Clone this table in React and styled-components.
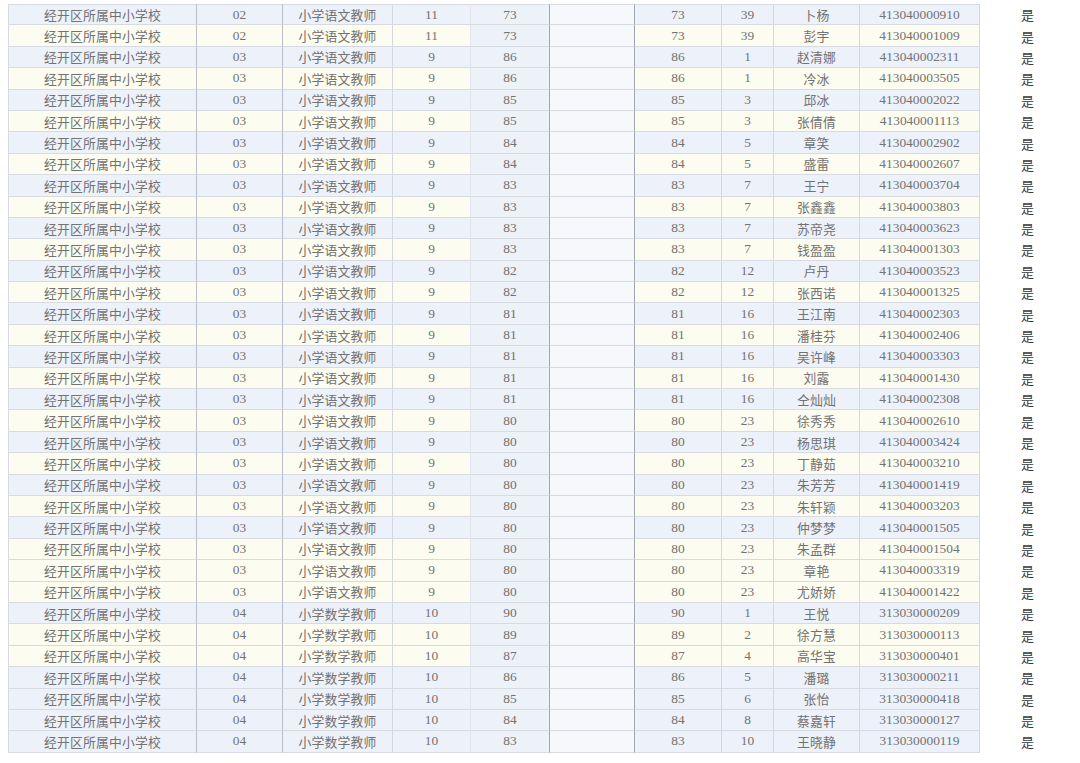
import React from "react";
import styled, { createGlobalStyle } from "styled-components";

const GlobalStyle = createGlobalStyle`
  html, body {
    margin: 0;
    padding: 0;
    background: #ffffff;
  }
  body {
    font-family: "Liberation Serif", "Noto Sans CJK SC", serif;
  }
`;

const SCHOOL = "经开区所属中小学校";

// [岗位代码, 岗位, 招聘人数, 笔试成绩, 综合成绩, 名次, 姓名, 准考证号]
const rows = [
  ["02", "小学语文教师", "11", "73", "73", "39", "卜杨", "413040000910"],
  ["02", "小学语文教师", "11", "73", "73", "39", "彭宇", "413040001009"],
  ["03", "小学语文教师", "9", "86", "86", "1", "赵清娜", "413040002311"],
  ["03", "小学语文教师", "9", "86", "86", "1", "冷冰", "413040003505"],
  ["03", "小学语文教师", "9", "85", "85", "3", "邱冰", "413040002022"],
  ["03", "小学语文教师", "9", "85", "85", "3", "张倩倩", "413040001113"],
  ["03", "小学语文教师", "9", "84", "84", "5", "章笑", "413040002902"],
  ["03", "小学语文教师", "9", "84", "84", "5", "盛雷", "413040002607"],
  ["03", "小学语文教师", "9", "83", "83", "7", "王宁", "413040003704"],
  ["03", "小学语文教师", "9", "83", "83", "7", "张鑫鑫", "413040003803"],
  ["03", "小学语文教师", "9", "83", "83", "7", "苏帝尧", "413040003623"],
  ["03", "小学语文教师", "9", "83", "83", "7", "钱盈盈", "413040001303"],
  ["03", "小学语文教师", "9", "82", "82", "12", "卢丹", "413040003523"],
  ["03", "小学语文教师", "9", "82", "82", "12", "张西诺", "413040001325"],
  ["03", "小学语文教师", "9", "81", "81", "16", "王江南", "413040002303"],
  ["03", "小学语文教师", "9", "81", "81", "16", "潘桂芬", "413040002406"],
  ["03", "小学语文教师", "9", "81", "81", "16", "吴许峰", "413040003303"],
  ["03", "小学语文教师", "9", "81", "81", "16", "刘露", "413040001430"],
  ["03", "小学语文教师", "9", "81", "81", "16", "仝灿灿", "413040002308"],
  ["03", "小学语文教师", "9", "80", "80", "23", "徐秀秀", "413040002610"],
  ["03", "小学语文教师", "9", "80", "80", "23", "杨思琪", "413040003424"],
  ["03", "小学语文教师", "9", "80", "80", "23", "丁静茹", "413040003210"],
  ["03", "小学语文教师", "9", "80", "80", "23", "朱芳芳", "413040001419"],
  ["03", "小学语文教师", "9", "80", "80", "23", "朱轩颖", "413040003203"],
  ["03", "小学语文教师", "9", "80", "80", "23", "仲梦梦", "413040001505"],
  ["03", "小学语文教师", "9", "80", "80", "23", "朱孟群", "413040001504"],
  ["03", "小学语文教师", "9", "80", "80", "23", "章艳", "413040003319"],
  ["03", "小学语文教师", "9", "80", "80", "23", "尤娇娇", "413040001422"],
  ["04", "小学数学教师", "10", "90", "90", "1", "王悦", "313030000209"],
  ["04", "小学数学教师", "10", "89", "89", "2", "徐方慧", "313030000113"],
  ["04", "小学数学教师", "10", "87", "87", "4", "高华宝", "313030000401"],
  ["04", "小学数学教师", "10", "86", "86", "5", "潘璐", "313030000211"],
  ["04", "小学数学教师", "10", "85", "85", "6", "张怡", "313030000418"],
  ["04", "小学数学教师", "10", "84", "84", "8", "蔡嘉轩", "313030000127"],
  ["04", "小学数学教师", "10", "83", "83", "10", "王晓静", "313030000119"],
];

// rows (1-based) shaded cream instead of blue
const creamRows = new Set([
  2, 4, 6, 8, 10, 12, 14, 16, 18, 20, 22, 24, 26, 27, 28, 30, 31,
]);

// right border tone per column
const edges = ["mid", "mid", "light", "faint", "dark", "dark", "light", "light", "light", "light"];

const edgeColor = {
  faint: "#e2e5ec",
  light: "#d3d7df",
  mid: "#b9bdc6",
  dark: "#a2a6ae",
};

const Page = styled.div`
  padding: 4px 0 0 8px;
  width: 1072px;
`;

const Sheet = styled.div`
  display: flex;
  flex-direction: column;
`;

const Row = styled.div`
  display: grid;
  grid-template-columns: 189px 86px 110px 78px 79px 85px 87px 52px 86px 120px 95px;
  height: 21.4px;
`;

const Cell = styled.div`
  box-sizing: border-box;
  display: flex;
  align-items: center;
  justify-content: center;
  height: 100%;
  font-size: 13.4px;
  color: #727272;
  white-space: nowrap;
  border-right: 1px solid ${(p) => edgeColor[p.$edge]};
  border-bottom: 1px solid #d7dae1;
  border-top: ${(p) => (p.$first ? "1px solid #d7dae1" : "none")};
  border-left: ${(p) => (p.$lead ? "1px solid #d7dae1" : "none")};
  background: ${(p) =>
    p.$tone === "blank"
      ? "#f7f8fc"
      : p.$tone === "score"
      ? "#edf1f8"
      : p.$cream
      ? "#fdfcf0"
      : "#edf1f9"};
`;

const Hanzi = styled.span`
  font-family: "Noto Sans CJK SC", sans-serif;
  font-size: 12.8px;
  letter-spacing: 0.2px;
`;

const Mark = styled.div`
  display: flex;
  align-items: center;
  justify-content: center;
  padding-left: 0;
  font-family: "Noto Sans CJK SC", sans-serif;
  font-size: 13px;
  color: #3a3a3a;
`;

export default function App() {
  return (
    <>
      <GlobalStyle />
      <Page>
        <Sheet>
          {rows.map((r, i) => {
            const cream = creamRows.has(i + 1);
            const first = i === 0;
            const cells = [
              { v: SCHOOL, cn: true },
              { v: r[0] },
              { v: r[1], cn: true },
              { v: r[2] },
              { v: r[3], tone: "score" },
              { v: "", tone: "blank" },
              { v: r[4] },
              { v: r[5] },
              { v: r[6], cn: true },
              { v: r[7] },
            ];
            return (
              <Row key={i}>
                {cells.map((c, j) => (
                  <Cell
                    key={j}
                    $edge={edges[j]}
                    $cream={cream}
                    $tone={c.tone}
                    $first={first}
                    $lead={j === 0}
                  >
                    {c.cn ? <Hanzi>{c.v}</Hanzi> : c.v}
                  </Cell>
                ))}
                <Mark>是</Mark>
              </Row>
            );
          })}
        </Sheet>
      </Page>
    </>
  );
}
